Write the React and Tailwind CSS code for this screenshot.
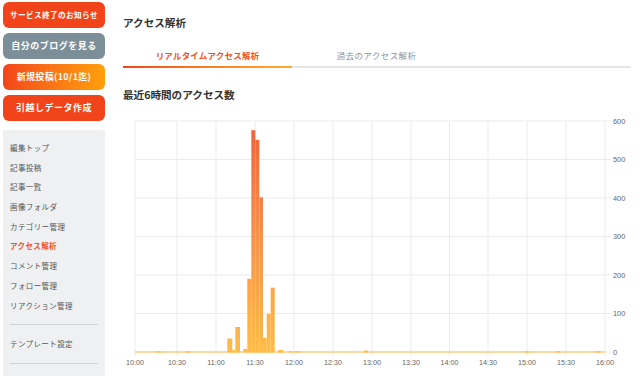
import React from 'react';

// 5 buttons + menu on the left, realtime access chart on the right
const topButtons = [
  { label: 'サービス終了のお知らせ', cls: 'bg-[#f2441a] text-[7.6px] tracking-[0.4px]' },
  { label: '自分のブログを見る', cls: 'bg-[#7c8e98] text-[9px] tracking-[0.5px]' },
  { label: '新規投稿(10/1迄)', cls: 'bg-gradient-to-r from-[#f2441a] to-[#ff9f0a] text-[9px] tracking-[0.3px]' },
  { label: '引越しデータ作成', cls: 'bg-[#f2441a] text-[9px] tracking-[0.5px]' },
];

const menu = [
  '編集トップ',
  '記事投稿',
  '記事一覧',
  '画像フォルダ',
  'カテゴリー管理',
  'アクセス解析',
  'コメント管理',
  'フォロー管理',
  'リアクション管理',
];

const xTicks = ['10:00', '10:30', '11:00', '11:30', '12:00', '12:30', '13:00', '13:30', '14:00', '14:30', '15:00', '15:30', '16:00'];
const xPos = [135, 177, 216, 255, 294, 333, 372, 411, 449.5, 488, 527, 566, 605];
const yTicks = [600, 500, 400, 300, 200, 100, 0];

const BASE = 351;
const yOf = (v) => BASE - v * 0.385;

// [x0, x1, value]
const bars = [
  [157, 161, 2],
  [186, 190, 1.5],
  [227.3, 232.3, 35],
  [232.3, 235.3, 5],
  [235.3, 240, 65],
  [243.3, 247.3, 8],
  [247.3, 251.3, 190],
  [251.3, 255.3, 576],
  [255.3, 259.3, 551],
  [259.3, 263, 402],
  [263, 266.7, 37],
  [266.7, 270.7, 99],
  [270.7, 274.7, 167],
  [278.3, 283.3, 5],
  [289, 293, 2],
  [295, 299, 2],
  [364, 368, 4],
  [525, 529, 2],
  [556, 560, 2.5],
  [595, 600, 2],
];

const AccessChart = () => (
  <svg width="517" height="266" viewBox="123 110 517 266" className="block">
    <defs>
      <linearGradient id="barFill" gradientUnits="userSpaceOnUse" x1="0" y1="120" x2="0" y2="351">
        <stop offset="0" stopColor="#f2613a" />
        <stop offset="0.5" stopColor="#f9924a" />
        <stop offset="1" stopColor="#ffbc48" />
      </linearGradient>
    </defs>
    {/* grid */}
    {yTicks.map((v) => (
      <line key={v} x1="134.5" x2="611" y1={yOf(v)} y2={yOf(v)} stroke="#ebebeb" strokeWidth="1" />
    ))}
    {xPos.map((x) => (
      <line key={x} x1={x} x2={x} y1="120" y2="355" stroke="#ebebeb" strokeWidth="1" />
    ))}
    {/* bars */}
    {bars.map(([x0, x1, v], i) => (
      <rect key={i} x={x0} y={yOf(v)} width={x1 - x0} height={BASE - yOf(v) + 0.5} fill="url(#barFill)" />
    ))}
    <line x1="135" x2="605" y1={BASE} y2={BASE} stroke="#ffbc48" strokeWidth="1.2" />
    {/* labels */}
    {yTicks.map((v) => (
      <text
        key={v}
        x="613"
        y={yOf(v) + 2.6}
        fontSize="7.4"
        fill="#666"
        fontFamily="'Liberation Sans', Arial, sans-serif"
      >
        {v}
      </text>
    ))}
    {xTicks.map((t, i) => (
      <text
        key={t}
        x={xPos[i]}
        y="363.6"
        textAnchor="middle"
        fontSize="7.2"
        fill="#666"
        fontFamily="'Liberation Sans', Arial, sans-serif"
      >
        {t}
      </text>
    ))}
  </svg>
);

export default function App() {
  return (
    <div
      className="w-[640px] h-[376px] overflow-hidden bg-white flex text-[#333]"
      style={{ fontFamily: "'Noto Sans CJK JP', 'Noto Sans', sans-serif" }}
    >
      {/* sidebar */}
      <div className="w-[105px] shrink-0 pl-[3px] pt-[2px] flex flex-col">
        <div className="flex flex-col gap-[5px]">
          {topButtons.map((b) => (
            <div
              key={b.label}
              className={`h-[26px] rounded-[6px] flex items-center justify-center text-white font-bold whitespace-nowrap ${b.cls}`}
            >
              {b.label}
            </div>
          ))}
        </div>
        <div className="mt-[9px] flex-1 bg-[#eef0f2] pt-[8px] px-[7px]">
          {menu.map((m) => (
            <div
              key={m}
              className={`h-[19.7px] leading-[19.7px] text-[7.5px] tracking-[0.4px] whitespace-nowrap ${
                m === 'アクセス解析' ? 'text-[#f4511e] font-bold' : 'text-[#555]'
              }`}
            >
              {m}
            </div>
          ))}
          <div className="mt-[9px] h-px bg-[#cdd5db]" />
          <div className="h-[19.7px] leading-[19.7px] mt-[9px] text-[7.5px] tracking-[0.4px] text-[#555]">
            テンプレート設定
          </div>
          <div className="mt-[9px] h-px bg-[#cdd5db]" />
        </div>
      </div>

      {/* main */}
      <div className="flex-1 pl-[18px] pt-[15px] flex flex-col">
        <div className="h-[16px] leading-[16px] text-[10.6px] font-bold">アクセス解析</div>

        <div className="mt-[14px] w-[508px] flex">
          <div className="w-[169px] flex flex-col">
            <div className="h-[21px] leading-[21px] text-center text-[8.5px] tracking-[0.2px] font-bold text-[#f4511e]">
              リアルタイムアクセス解析
            </div>
            <div className="h-[2px] bg-gradient-to-r from-[#f2441a] to-[#ffab2e]" />
          </div>
          <div className="w-[169px] flex flex-col">
            <div className="h-[21px] leading-[21px] text-center text-[8.5px] tracking-[0.4px] text-[#8b959c]">
              過去のアクセス解析
            </div>
            <div className="h-[2px] bg-[#e3e7eb]" />
          </div>
          <div className="flex-1 flex flex-col justify-end">
            <div className="h-[2px] bg-[#e3e7eb]" />
          </div>
        </div>

        <div className="mt-[19px] h-[16px] leading-[16px] text-[10.6px] font-bold">最近6時間のアクセス数</div>

        <div className="mt-[8px]">
          <AccessChart />
        </div>
      </div>
    </div>
  );
}
